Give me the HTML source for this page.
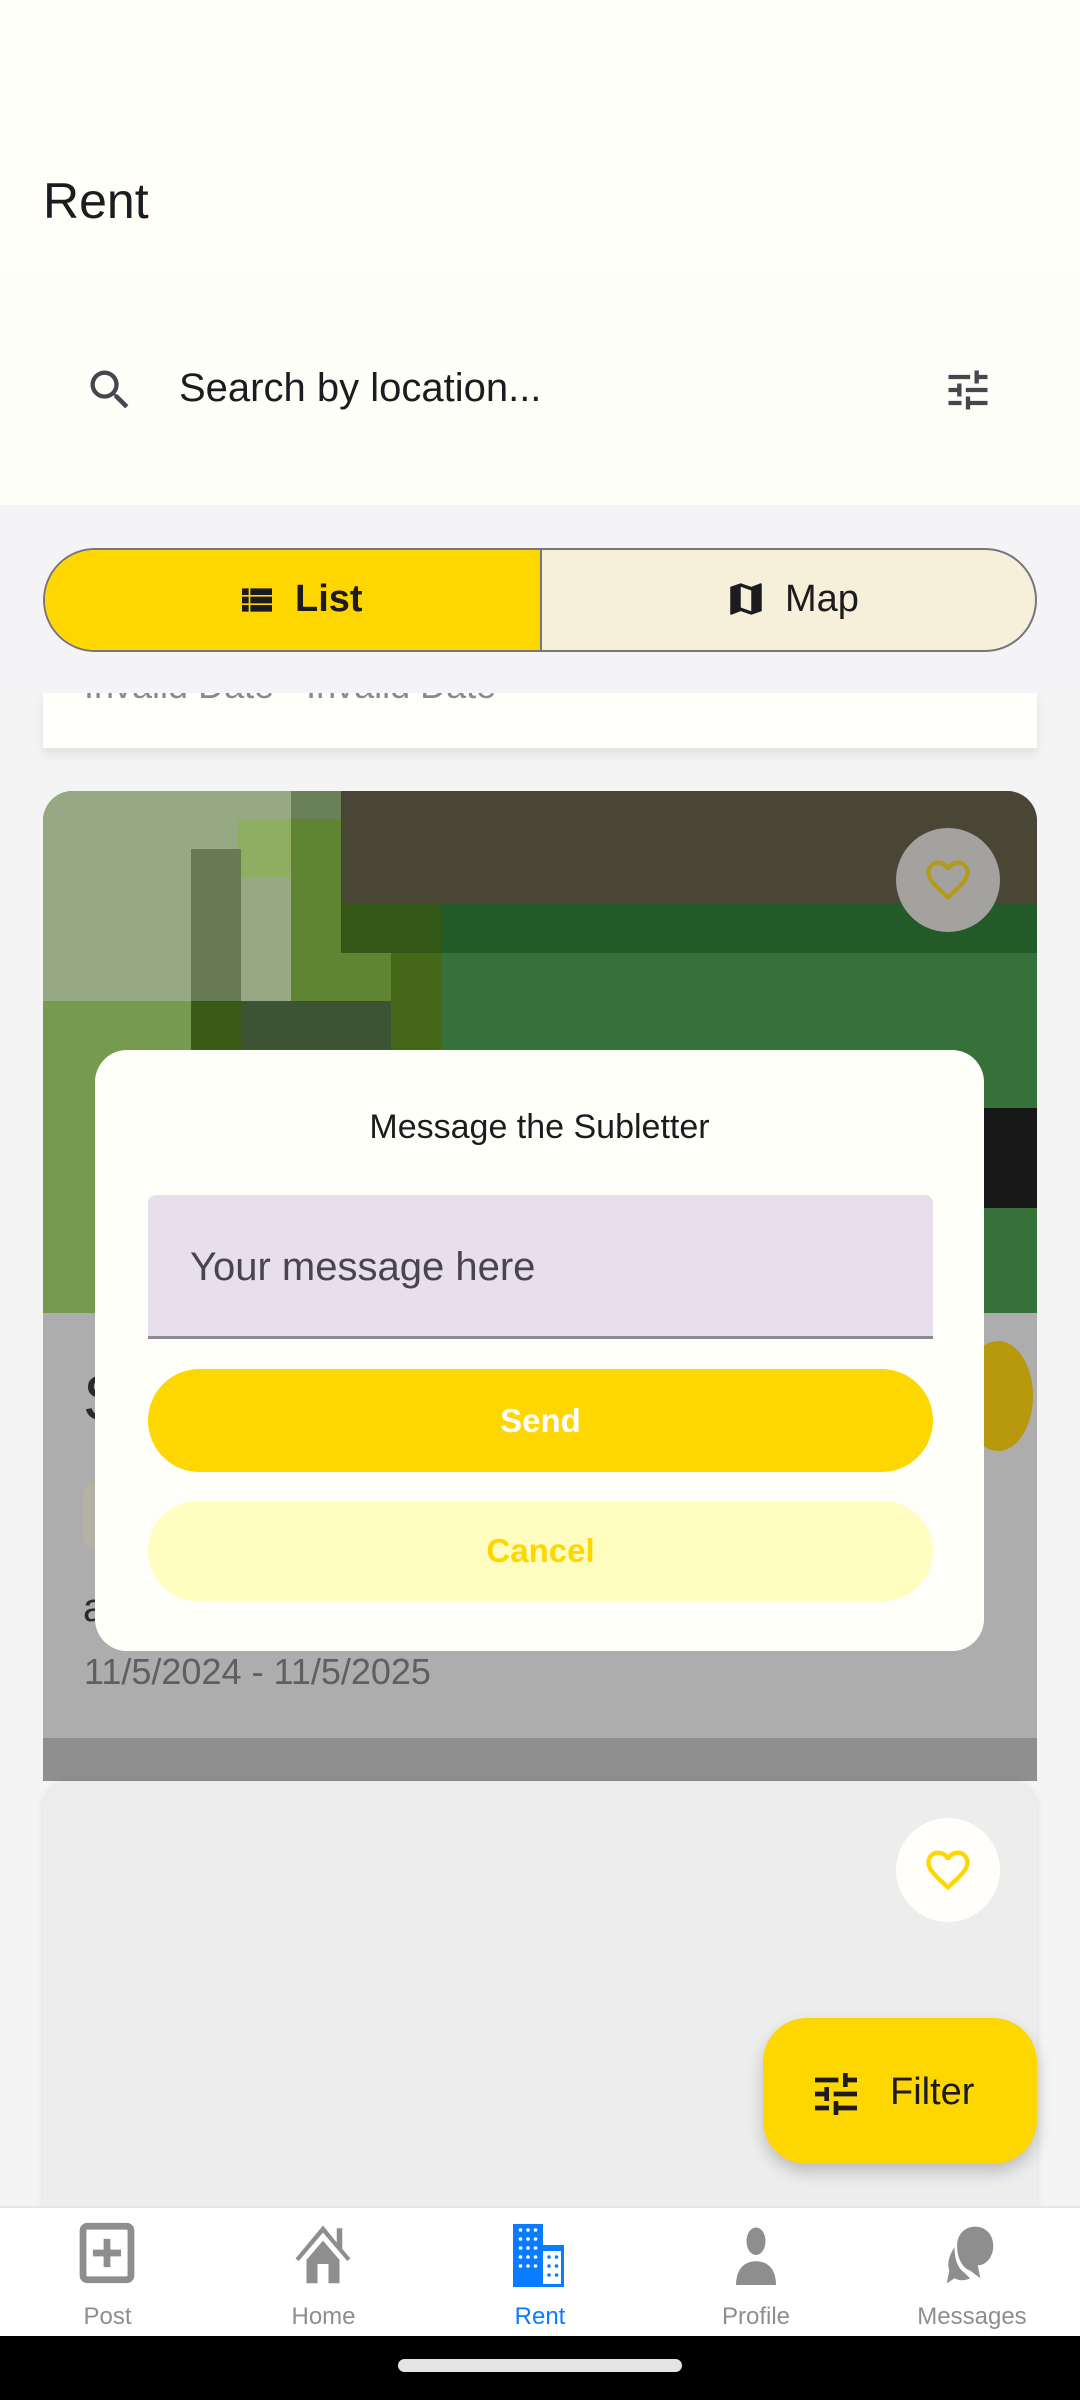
<!DOCTYPE html>
<html><head><meta charset="utf-8"><style>
*{margin:0;padding:0;box-sizing:border-box}
body{width:1080px;height:2400px;position:relative;overflow:hidden;background:#f4f4f4;font-family:"Liberation Sans",sans-serif}
.a{position:absolute}
</style></head><body>
<div class="a" style="left:0;top:0;width:1080px;height:272px;background:#fffef9"></div>
<div class="a" style="left:43px;top:172px;font-size:50px;color:#1c1b1f">Rent</div>
<div class="a" style="left:0;top:272px;width:1080px;height:233px;background:#fefef8"></div>
<svg class="a" style="left:84px;top:364px" width="52" height="52" viewBox="0 0 24 24"><path fill="#49454f" d="M15.5 14h-.79l-.28-.27A6.470 6.470 0 0016 9.5 6.5 6.5 0 109.5 16c1.61 0 3.09-.59 4.23-1.57l.27.28v.79l5 4.99L20.49 19l-4.99-5zm-6 0C7.01 14 5 11.990 5 9.5S7.01 5 9.5 5 14 7.01 14 9.5 11.99 14 9.5 14z"/></svg>
<div class="a" style="left:179px;top:366px;font-size:40px;color:#1c1b1f">Search by location...</div>
<svg class="a" style="left:942px;top:364px" width="52" height="52" viewBox="0 0 24 24"><path fill="#49454f" d="M3 17v2h6v-2H3zM3 5v2h10V5H3zm10 16v-2h8v-2h-8v-2h-2v6h2zM7 9v2H3v2h4v2h2V9H7zm14 4v-2H11v2h10zm-6-4h2V7h4V5h-4V3h-2v6z"/></svg>
<!-- card 1 partial -->
<div class="a" style="left:43px;top:693px;width:994px;height:55px;background:#fffffb;box-shadow:0 6px 10px rgba(0,0,0,.08);overflow:hidden">
 <div class="a" style="left:41px;top:-28px;font-size:36px;color:#8a8a8a">Invalid Date - Invalid Date</div>
</div>
<div class="a" style="left:0;top:505px;width:1080px;height:188px;background:#f4f4f6"></div>
<div class="a" style="left:43px;top:548px;width:994px;height:104px;border:2px solid #79747e;border-radius:52px;overflow:hidden;background:#f6efd9">
 <div class="a" style="left:0;top:0;width:497px;height:100px;background:#ffd700;border-right:2px solid #79747e"></div>
 <svg class="a" style="left:192px;top:30px" width="40" height="40" viewBox="0 0 24 24"><path fill="#1c1b1f" d="M3 14h4v-4H3v4zm0 5h4v-4H3v4zM3 9h4V5H3v4zm5 5h13v-4H8v4zm0 5h13v-4H8v4zM8 5v4h13V5H8z"/></svg>
 <div class="a" style="left:250px;top:28px;font-size:38px;font-weight:bold;color:#1c1b1f">List</div>
 <svg class="a" style="left:680px;top:28px" width="42" height="42" viewBox="0 0 24 24"><path fill="#1c1b1f" d="M20.5 3l-.16.03L15 5.1 9 3 3.36 4.9c-.21.07-.36.25-.36.48V20.5c0 .28.22.5.5.5l.16-.03L9 18.9l6 2.1 5.64-1.9c.21-.07.36-.25.36-.48V3.5c0-.28-.22-.5-.5-.5zM15 19l-6-2.11V5l6 2.11V19z"/></svg>
 <div class="a" style="left:740px;top:28px;font-size:38px;color:#1c1b1f">Map</div>
</div>
<!-- card 2 -->
<div class="a" style="left:43px;top:791px;width:994px;height:947px;background:#adadad;border-radius:30px 30px 0 0;overflow:hidden">
 <div class="a" style="left:0;top:0;width:994px;height:522px;background:#36713a"></div>
 <div class="a" style="left:0;top:0;width:248px;height:210px;background:#97a884"></div>
 <div class="a" style="left:194px;top:28px;width:54px;height:58px;background:#8fae62"></div>
 <div class="a" style="left:248px;top:0;width:100px;height:210px;background:#5f8532"></div>
 <div class="a" style="left:248px;top:0;width:50px;height:28px;background:#6a8058"></div>
 <div class="a" style="left:148px;top:58px;width:50px;height:152px;background:#687a54"></div>
 <div class="a" style="left:298px;top:0;width:696px;height:112px;background:#4a4636"></div>
 <div class="a" style="left:298px;top:112px;width:100px;height:50px;background:#345818"></div>
 <div class="a" style="left:398px;top:112px;width:596px;height:50px;background:#225b27"></div>
 <div class="a" style="left:348px;top:162px;width:50px;height:100px;background:#456818"></div>
 <div class="a" style="left:0;top:210px;width:148px;height:312px;background:#769a4e"></div>
 <div class="a" style="left:148px;top:210px;width:50px;height:312px;background:#3a5a18"></div>
 <div class="a" style="left:198px;top:210px;width:150px;height:312px;background:#3c5434"></div>
 <div class="a" style="left:348px;top:262px;width:50px;height:260px;background:#446040"></div>
 <div class="a" style="left:940px;top:317px;width:54px;height:100px;background:#181818"></div>
 <div class="a" style="left:853px;top:37px;width:104px;height:104px;border-radius:50%;background:#a3a29f"></div>
 <svg class="a" style="left:879px;top:63px" width="52" height="52" viewBox="0 0 24 24"><path fill="#b39a1f" d="M16.5 3c-1.74 0-3.41.81-4.5 2.09C10.91 3.81 9.24 3 7.5 3 4.42 3 2 5.42 2 8.5c0 3.78 3.4 6.86 8.55 11.54L12 21.35l1.45-1.32C18.6 15.36 22 12.28 22 8.5 22 5.42 19.58 3 16.5 3zm-4.4 15.55l-.1.1-.1-.1C7.14 14.24 4 11.39 4 8.5 4 6.5 5.5 5 7.5 5c1.54 0 3.04.99 3.57 2.36h1.87C13.46 5.99 14.96 5 16.5 5c2 0 3.5 1.5 3.5 3.5 0 2.89-3.14 5.740-7.9 10.05z"/></svg>
 <div class="a" style="left:40px;top:570px;font-size:64px;color:#2a2a2a">S</div>
 <div class="a" style="left:920px;top:550px;width:70px;height:110px;border-radius:50%;background:#b8980c"></div>
 <div class="a" style="left:40px;top:690px;width:60px;height:70px;border-radius:14px;background:#b4b2a4"></div>
 <div class="a" style="left:40px;top:795px;font-size:40px;color:#2a2a2a">a</div>
 <div class="a" style="left:41px;top:860px;font-size:36px;color:#5f5f5f">11/5/2024 - 11/5/2025</div>
</div>
<div class="a" style="left:43px;top:1738px;width:994px;height:43px;background:#8f8f8f"></div>
<!-- card 3 -->
<div class="a" style="left:43px;top:1781px;width:994px;height:430px;background:#ededed;border-radius:30px 30px 0 0;box-shadow:0 0 8px rgba(0,0,0,.1)"></div>
<div class="a" style="left:896px;top:1818px;width:104px;height:104px;border-radius:50%;background:#fffefa"></div>
<svg class="a" style="left:922px;top:1844px" width="52" height="52" viewBox="0 0 24 24"><path fill="#ffd700" d="M16.5 3c-1.74 0-3.41.81-4.5 2.09C10.91 3.81 9.24 3 7.5 3 4.42 3 2 5.42 2 8.5c0 3.78 3.4 6.86 8.55 11.54L12 21.35l1.45-1.32C18.6 15.36 22 12.28 22 8.5 22 5.42 19.58 3 16.5 3zm-4.4 15.55l-.1.1-.1-.1C7.14 14.24 4 11.39 4 8.5 4 6.5 5.5 5 7.5 5c1.54 0 3.04.99 3.57 2.36h1.87C13.46 5.99 14.96 5 16.5 5c2 0 3.5 1.5 3.5 3.5 0 2.89-3.14 5.74-7.9 10.05z"/></svg>
<!-- FAB -->
<div class="a" style="left:763px;top:2018px;width:274px;height:146px;border-radius:44px;background:#ffd700;box-shadow:0 8px 16px rgba(0,0,0,.2)"></div>
<svg class="a" style="left:808px;top:2066px" width="56" height="56" viewBox="0 0 24 24"><path fill="#1c1b1f" d="M3 17v2h6v-2H3zM3 5v2h10V5H3zm10 16v-2h8v-2h-8v-2h-2v6h2zM7 9v2H3v2h4v2h2V9H7zm14 4v-2H11v2h10zm-6-4h2V7h4V5h-4V3h-2v6z"/></svg>
<div class="a" style="left:890px;top:2071px;font-size:38px;color:#1c1b1f">Filter</div>
<!-- dialog -->
<div class="a" style="left:95px;top:1050px;width:889px;height:601px;border-radius:32px;background:#fffffa">
 <div class="a" style="left:0;top:58px;width:889px;text-align:center;font-size:34px;color:#1c1b1f">Message the Subletter</div>
 <div class="a" style="left:53px;top:145px;width:785px;height:144px;background:#e7dfec;border-radius:8px 8px 0 0;border-bottom:3px solid #8f8a94"></div>
 <div class="a" style="left:95px;top:195px;font-size:40px;color:#49454f">Your message here</div>
 <div class="a" style="left:53px;top:319px;width:785px;height:103px;border-radius:52px;background:#ffd700;text-align:center;line-height:103px;font-size:33px;font-weight:bold;color:#fff">Send</div>
 <div class="a" style="left:53px;top:451px;width:785px;height:100px;border-radius:50px;background:#fffdc0;text-align:center;line-height:100px;font-size:33px;font-weight:bold;color:#ffd700">Cancel</div>
</div>
<!-- nav -->
<div class="a" style="left:0;top:2206px;width:1080px;height:130px;background:#fff;border-top:2px solid #e6e6e6"></div>
<svg class="a" style="left:78px;top:2222px" width="58" height="62" viewBox="0 0 20 22"><rect x="1.5" y="1.5" width="17" height="19" rx="1.5" fill="none" stroke="#8e8e8e" stroke-width="2.4"/><path d="M10 6v10M5 11h10" stroke="#8e8e8e" stroke-width="2.4"/></svg>
<svg class="a" style="left:290px;top:2222px" width="66" height="62" viewBox="0 0 24 22"><path fill="#8e8e8e" d="M12 1L2 13l1.2.9L12 3.6l8.8 10.3L22 13l-3-3.5V2h-2v5.2z M6 13.5L12 6.5l6 7V22h-4v-7h-4v7H6z"/></svg>
<svg class="a" style="left:510px;top:2221px" width="60" height="66" viewBox="0 0 20 22"><path fill="#0a7cff" d="M1 1h10v7h7v14H1z"/><g fill="#fff"><circle cx="3.5" cy="3" r=".6"/><circle cx="6" cy="3" r=".6"/><circle cx="8.5" cy="3" r=".6"/><circle cx="3.5" cy="6" r=".6"/><circle cx="6" cy="6" r=".6"/><circle cx="8.5" cy="6" r=".6"/><circle cx="3.5" cy="9" r=".6"/><circle cx="6" cy="9" r=".6"/><circle cx="8.5" cy="9" r=".6"/><circle cx="3.5" cy="12" r=".6"/><circle cx="6" cy="12" r=".6"/><circle cx="8.5" cy="12" r=".6"/><circle cx="3.5" cy="15" r=".6"/><circle cx="6" cy="15" r=".6"/><circle cx="8.5" cy="15" r=".6"/><rect x="11" y="10" width="6" height="11"/></g><g fill="#0a7cff"><circle cx="13" cy="12" r=".6"/><circle cx="15.5" cy="12" r=".6"/><circle cx="13" cy="15" r=".6"/><circle cx="15.5" cy="15" r=".6"/><circle cx="13" cy="18" r=".6"/><circle cx="15.5" cy="18" r=".6"/></g></svg>
<svg class="a" style="left:726px;top:2224px" width="60" height="62" viewBox="0 0 24 24"><ellipse cx="12" cy="6.5" rx="3.8" ry="5.5" fill="#8e8e8e"/><path fill="#8e8e8e" d="M4 24c0-6 3-9.5 8-9.5s8 3.5 8 9.5z"/></svg>
<svg class="a" style="left:938px;top:2224px" width="64" height="62" viewBox="0 0 24 24"><path fill="#8e8e8e" d="M14 1c4 0 7 3 7 7.5S18 16 15 16l1 5-4-3c-3-1-5-5-5-9.5S10 1 14 1z M6 9c-2 3-3 6-2 9l-1 5 3-2c2 1 4 1 6 0l-2-2c-3-2-4-6-4-10z"/></svg>
<div class="a" style="left:0;top:2303px;width:215px;text-align:center;font-size:24px;color:#8e8e8e">Post</div>
<div class="a" style="left:216px;top:2303px;width:215px;text-align:center;font-size:24px;color:#8e8e8e">Home</div>
<div class="a" style="left:432px;top:2303px;width:216px;text-align:center;font-size:24px;color:#0a7cff">Rent</div>
<div class="a" style="left:648px;top:2303px;width:216px;text-align:center;font-size:24px;color:#8e8e8e">Profile</div>
<div class="a" style="left:864px;top:2303px;width:216px;text-align:center;font-size:24px;color:#8e8e8e">Messages</div>
<div class="a" style="left:0;top:2336px;width:1080px;height:64px;background:#000"></div>
<div class="a" style="left:398px;top:2359px;width:284px;height:13px;border-radius:7px;background:#e4e4e4"></div>
</body></html>
